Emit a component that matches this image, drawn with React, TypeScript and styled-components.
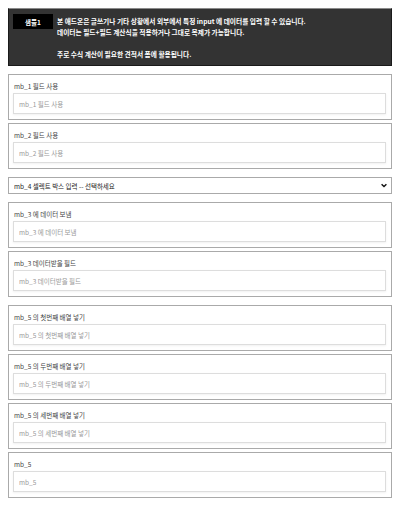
import React from "react";
import styled, { createGlobalStyle } from "styled-components";

const GlobalStyle = createGlobalStyle`
  body {
    margin: 8px;
    background: #ffffff;
    font-family: "Noto Sans CJK KR", "Noto Sans", sans-serif;
    color: #333333;
  }
  * {
    box-sizing: border-box;
  }
`;

const Notice = styled.div`
  display: flex;
  align-items: flex-start;
  gap: 4px;
  background: #333333;
  border: 1px solid #1a1a1a;
  border-top-color: #8a8a8a;
  padding: 5px 4px 5px 4px;
  min-height: 57px;
`;

const Badge = styled.div`
  flex: 0 0 40px;
  height: 15px;
  background: #000000;
  color: #ffffff;
  font-size: 6.5px;
  font-weight: bold;
  display: flex;
  align-items: center;
  justify-content: center;
`;

const NoticeText = styled.div`
  color: #ffffff;
  font-size: 6.7px;
  font-weight: bold;
  line-height: 11px;
  margin-top: 2px;
`;

const Field = styled.div<{ $gap: number }>`
  margin-top: ${(p) => p.$gap}px;
  border: 1px solid #aaaaaa;
  padding: 5px 5px 5px 4px;
`;

const Label = styled.label`
  display: block;
  font-size: 6.5px;
  line-height: 12px;
  color: #444444;
  padding-left: 1px;
`;

const Input = styled.input`
  display: block;
  width: 100%;
  height: 21px;
  margin: 1px 0 0 0;
  border: 1px solid #dddddd;
  box-shadow: 0 1px 2px rgba(0, 0, 0, 0.06);
  padding: 0 5px;
  font-family: inherit;
  font-size: 6.5px;
  color: #333333;
  background: #ffffff;
  outline: none;

  &::placeholder {
    color: #999999;
  }
`;

const SelectWrap = styled.div<{ $gap: number }>`
  position: relative;
  margin-top: ${(p) => p.$gap}px;
`;

const Select = styled.select`
  display: block;
  width: 100%;
  height: 17px;
  appearance: none;
  border: 1px solid #aaaaaa;
  border-radius: 0;
  background: #ffffff;
  padding: 0 16px 0 5px;
  font-family: inherit;
  font-size: 6.5px;
  color: #222222;
  outline: none;
`;

const Chevron = styled.svg`
  position: absolute;
  right: 5px;
  top: 6px;
  width: 6px;
  height: 5px;
  pointer-events: none;
`;

const fields = [
  { id: "mb_1", label: "mb_1 필드 사용", gap: 8 },
  { id: "mb_2", label: "mb_2 필드 사용", gap: 3 },
];

const fieldsAfter = [
  { id: "mb_3", label: "mb_3 에 데이터 보냄", gap: 8 },
  { id: "mb_3b", label: "mb_3 데이터받을 필드", gap: 3 },
  { id: "mb_5a", label: "mb_5 의 첫번째 배열 넣기", gap: 8 },
  { id: "mb_5b", label: "mb_5 의 두번째 배열 넣기", gap: 3 },
  { id: "mb_5c", label: "mb_5 의 세번째 배열 넣기", gap: 3 },
  { id: "mb_5", label: "mb_5", gap: 3 },
];

const App: React.FC = () => {
  return (
    <>
      <GlobalStyle />
      <Notice>
        <Badge>샘플1</Badge>
        <NoticeText>
          본 애드온은 글쓰기나 기타 상황에서 외부에서 특정 input 에 데이터를 입력 할 수 있습니다.
          <br />
          데이터는 필드+필드 계산식을 적용하거나 그대로 복제가 가능합니다.
          <br />
          <br />
          주로 수식 계산이 필요한 견적서 폼에 활용됩니다.
        </NoticeText>
      </Notice>

      {fields.map((f) => (
        <Field key={f.id} $gap={f.gap}>
          <Label htmlFor={f.id}>{f.label}</Label>
          <Input id={f.id} placeholder={f.label} />
        </Field>
      ))}

      <SelectWrap $gap={8}>
        <Select defaultValue="">
          <option value="">mb_4 셀렉트 박스 입력 -- 선택하세요</option>
        </Select>
        <Chevron viewBox="0 0 6 5">
          <path d="M0.6 1.2 L3 3.6 L5.4 1.2" fill="none" stroke="#111" strokeWidth="1.4" />
        </Chevron>
      </SelectWrap>

      {fieldsAfter.map((f) => (
        <Field key={f.id} $gap={f.gap}>
          <Label htmlFor={f.id}>{f.label}</Label>
          <Input id={f.id} placeholder={f.label} />
        </Field>
      ))}
    </>
  );
};

export default App;
